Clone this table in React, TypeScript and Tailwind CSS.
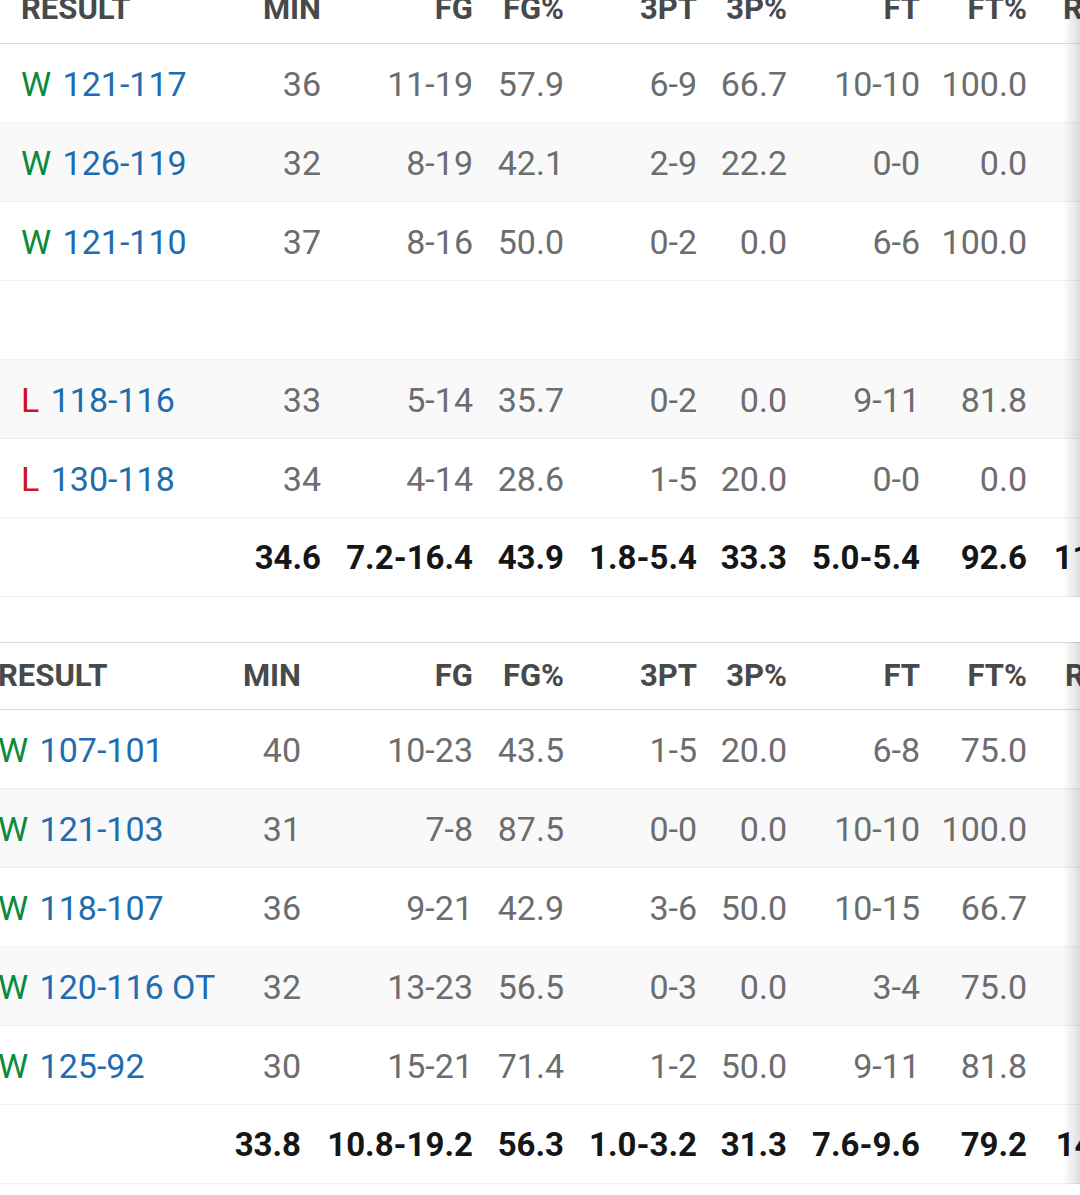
type Game = {
  res: "W" | "L";
  score: string;
  min: string;
  fg: string;
  fgp: string;
  tpt: string;
  tpp: string;
  ft: string;
  ftp: string;
  reb: string;
};

const first: (Game | null)[] = [
  { res: "W", score: "121-117", min: "36", fg: "11-19", fgp: "57.9", tpt: "6-9", tpp: "66.7", ft: "10-10", ftp: "100.0", reb: "6" },
  { res: "W", score: "126-119", min: "32", fg: "8-19", fgp: "42.1", tpt: "2-9", tpp: "22.2", ft: "0-0", ftp: "0.0", reb: "9" },
  { res: "W", score: "121-110", min: "37", fg: "8-16", fgp: "50.0", tpt: "0-2", tpp: "0.0", ft: "6-6", ftp: "100.0", reb: "8" },
  null,
  { res: "L", score: "118-116", min: "33", fg: "5-14", fgp: "35.7", tpt: "0-2", tpp: "0.0", ft: "9-11", ftp: "81.8", reb: "7" },
  { res: "L", score: "130-118", min: "34", fg: "4-14", fgp: "28.6", tpt: "1-5", tpp: "20.0", ft: "0-0", ftp: "0.0", reb: "5" },
];

const second: Game[] = [
  { res: "W", score: "107-101", min: "40", fg: "10-23", fgp: "43.5", tpt: "1-5", tpp: "20.0", ft: "6-8", ftp: "75.0", reb: "9" },
  { res: "W", score: "121-103", min: "31", fg: "7-8", fgp: "87.5", tpt: "0-0", tpp: "0.0", ft: "10-10", ftp: "100.0", reb: "6" },
  { res: "W", score: "118-107", min: "36", fg: "9-21", fgp: "42.9", tpt: "3-6", tpp: "50.0", ft: "10-15", ftp: "66.7", reb: "8" },
  { res: "W", score: "120-116 OT", min: "32", fg: "13-23", fgp: "56.5", tpt: "0-3", tpp: "0.0", ft: "3-4", ftp: "75.0", reb: "7" },
  { res: "W", score: "125-92", min: "30", fg: "15-21", fgp: "71.4", tpt: "1-2", tpp: "50.0", ft: "9-11", ftp: "81.8", reb: "5" },
];

const heads = ["MIN", "FG", "FG%", "3PT", "3P%", "FT", "FT%", "REB"];

function Table({
  cols,
  lead,
  rows,
  stripes,
  totals,
  topBorder,
}: {
  cols: string;
  lead: string;
  rows: (Game | null)[];
  stripes: boolean[];
  totals: string[];
  topBorder?: boolean;
}) {
  return (
    <div className="relative">
      <div className={`grid h-[68px] items-center border-b border-[#dcdcdc] text-[31px] font-bold text-[#48494a] ${cols} ${topBorder ? "border-t" : ""}`}>
        <div className={lead}>RESULT</div>
        {heads.map((h) => (
          <div key={h} className="text-right">
            {h}
          </div>
        ))}
      </div>
      {rows.map((g, i) => (
        <div key={i} className={`grid h-[79px] items-center border-b border-[#efefef] pt-[2px] text-[34px] text-[#6c6d6f] ${cols} ${stripes[i] ? "bg-[#f9f9f9]" : "bg-white"}`}>
          {g && (
            <>
              <div className={`whitespace-nowrap ${lead}`}>
                <span className={g.res === "W" ? "text-[#0b8a3c]" : "text-[#d0121b]"}>{g.res}</span>{" "}
                <span className="ml-[3px] text-[#1f6cb0]">{g.score}</span>
              </div>
              <div className="text-right">{g.min}</div>
              <div className="text-right">{g.fg}</div>
              <div className="text-right">{g.fgp}</div>
              <div className="text-right">{g.tpt}</div>
              <div className="text-right">{g.tpp}</div>
              <div className="text-right">{g.ft}</div>
              <div className="text-right">{g.ftp}</div>
              <div className="text-right">{g.reb}</div>
            </>
          )}
        </div>
      ))}
      <div className={`grid h-[79px] items-center border-b border-[#efefef] pt-[2px] text-[33px] font-bold text-[#151617] ${cols}`}>
        <div />
        {totals.map((t, i) => (
          <div key={i} className="whitespace-nowrap text-right">
            {t}
          </div>
        ))}
      </div>
      <div className="absolute right-0 top-0 h-full w-[17px] bg-gradient-to-r from-transparent to-[rgba(0,0,0,0.13)]" />
    </div>
  );
}

export default function App() {
  return (
    <div className="h-[1195px] w-[1080px] overflow-hidden bg-white font-['Roboto',sans-serif]">
      <div className="mt-[-24px]">
        <Table
          cols="grid-cols-[230px_91px_152px_91px_133px_90px_133px_107px_93px]"
          lead="pl-[21px]"
          rows={first}
          stripes={[false, true, false, false, true, false]}
          totals={["34.6", "7.2-16.4", "43.9", "1.8-5.4", "33.3", "5.0-5.4", "92.6", "11.7"]}
        />
        <div className="h-[45px]" />
        <div className="ml-[-2px]">
          <Table
            cols="grid-cols-[212px_91px_172px_91px_133px_90px_133px_107px_95px]"
            lead="pl-0"
            rows={second}
            stripes={[false, true, false, true, false]}
            totals={["33.8", "10.8-19.2", "56.3", "1.0-3.2", "31.3", "7.6-9.6", "79.2", "14.4"]}
            topBorder
          />
        </div>
      </div>
    </div>
  );
}
